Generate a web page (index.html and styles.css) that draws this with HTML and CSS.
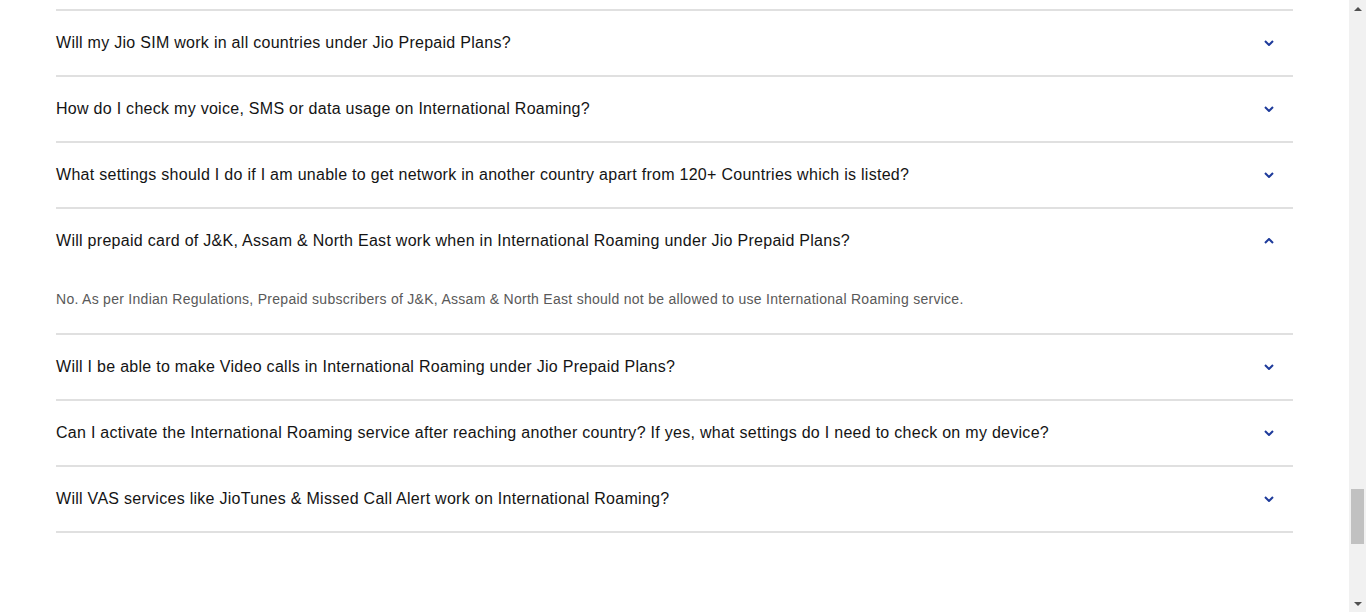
FILE: index.html
```html
<!DOCTYPE html>
<html lang="en">
<head>
<meta charset="utf-8">
<title>FAQ</title>
<link rel="stylesheet" href="styles.css">
</head>
<body>
<div class="page">
  <div class="faq">
    <div class="item">
      <div class="q"><span>Will my Jio SIM work in all countries under Jio Prepaid Plans?</span><svg class="chev" viewBox="0 0 10 6"><path d="M1 1 L5 5 L9 1"/></svg></div>
    </div>
    <div class="item">
      <div class="q"><span>How do I check my voice, SMS or data usage on International Roaming?</span><svg class="chev" viewBox="0 0 10 6"><path d="M1 1 L5 5 L9 1"/></svg></div>
    </div>
    <div class="item">
      <div class="q"><span>What settings should I do if I am unable to get network in another country apart from 120+ Countries which is listed?</span><svg class="chev" viewBox="0 0 10 6"><path d="M1 1 L5 5 L9 1"/></svg></div>
    </div>
    <div class="item open">
      <div class="q"><span>Will prepaid card of J&amp;K, Assam &amp; North East work when in International Roaming under Jio Prepaid Plans?</span><svg class="chev" viewBox="0 0 10 6"><path d="M1 5 L5 1 L9 5"/></svg></div>
      <div class="a">No. As per Indian Regulations, Prepaid subscribers of J&amp;K, Assam &amp; North East should not be allowed to use International Roaming service.</div>
    </div>
    <div class="item">
      <div class="q"><span>Will I be able to make Video calls in International Roaming under Jio Prepaid Plans?</span><svg class="chev" viewBox="0 0 10 6"><path d="M1 1 L5 5 L9 1"/></svg></div>
    </div>
    <div class="item">
      <div class="q"><span>Can I activate the International Roaming service after reaching another country? If yes, what settings do I need to check on my device?</span><svg class="chev" viewBox="0 0 10 6"><path d="M1 1 L5 5 L9 1"/></svg></div>
    </div>
    <div class="item">
      <div class="q"><span>Will VAS services like JioTunes &amp; Missed Call Alert work on International Roaming?</span><svg class="chev" viewBox="0 0 10 6"><path d="M1 1 L5 5 L9 1"/></svg></div>
    </div>
  </div>
</div>
<div class="scrollbar">
  <div class="arrow up"></div>
  <div class="track"><div class="thumb"></div></div>
  <div class="arrow down"></div>
</div>
</body>
</html>
```
FILE: styles.css
```css
html, body {
  margin: 0;
  padding: 0;
  background: #fff;
  overflow: hidden;
}
body {
  font-family: "Liberation Sans", Arial, sans-serif;
  color: #141414;
}
.page {
  width: 1349px;
  padding-top: 9px;
}
.faq {
  margin: 0 56px;
  width: 1237px;
  border-top: 2px solid #e0e0e0;
}
.item {
  border-bottom: 2px solid #e0e0e0;
}
.q {
  height: 64px;
  display: flex;
  align-items: center;
  justify-content: space-between;
  font-size: 16px;
  letter-spacing: 0.28px;
}
.chev {
  width: 10px;
  height: 6px;
  margin-right: 19px;
  flex: none;
}
.chev path {
  fill: none;
  stroke: #1e3b9b;
  stroke-width: 2;
}
.a {
  font-size: 14px;
  color: #595959;
  line-height: 20px;
  padding: 16px 0 24px;
  letter-spacing: 0.28px;
}
.scrollbar {
  position: fixed;
  top: 0;
  right: 0;
  width: 17px;
  height: 612px;
  background: #f1f1f1;
  display: flex;
  flex-direction: column;
}
.arrow {
  height: 17px;
  display: flex;
  align-items: center;
  justify-content: center;
}
.arrow.up::before {
  content: "";
  border-left: 4px solid transparent;
  border-right: 4px solid transparent;
  border-bottom: 4px solid #505050;
}
.arrow.down::before {
  content: "";
  border-left: 4px solid transparent;
  border-right: 4px solid transparent;
  border-top: 4px solid #505050;
}
.track {
  flex: 1;
  position: relative;
}
.thumb {
  position: absolute;
  left: 2px;
  right: 2px;
  top: 472px;
  height: 55px;
  background: #c1c1c1;
}
```
